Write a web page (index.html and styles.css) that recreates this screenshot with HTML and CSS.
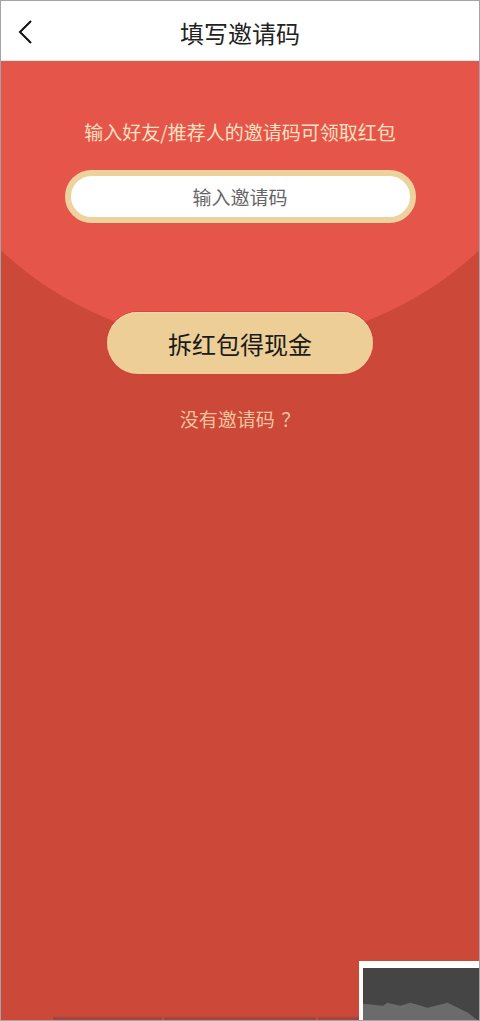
FILE: index.html
```html
<!DOCTYPE html>
<html lang="zh-CN">
<head>
<meta charset="utf-8">
<title>填写邀请码</title>
<link rel="stylesheet" href="styles.css">
</head>
<body>
<div class="frame">
  <header class="topbar">
    <button class="back" aria-label="返回">
      <svg width="16" height="26" viewBox="0 0 16 26"><polyline points="13,2 2,13 13,24" fill="none" stroke="#111" stroke-width="2"/></svg>
    </button>
    <h1 class="title">填写邀请码</h1>
  </header>
  <main class="envelope">
    <p class="hint">输入好友/推荐人的邀请码可领取红包</p>
    <div class="code-box">
      <input class="code-input" type="text" placeholder="输入邀请码">
    </div>
    <button class="open-btn">拆红包得现金</button>
    <a class="no-code">没有邀请码 <span class="q">？</span></a>
    <div class="tabs">
      <span class="tab t1"></span>
      <span class="tab t2"></span>
      <span class="tab t3"></span>
    </div>
  </main>
  <div class="badge">
    <svg class="badge-art" width="117" height="53" viewBox="0 0 117 53" preserveAspectRatio="none">
      <rect width="117" height="53" fill="#454545"/>
      <path d="M0,35 L20,37 L24,34 L37,37 L47,34 L64,39 L84,34 L94,39 L104,44 L112,50 L117,53 L0,53 Z" fill="#6b6b6b"/>
    </svg>
  </div>
</div>
</body>
</html>
```

FILE: styles.css
```css
* { box-sizing: border-box; }
html, body { margin: 0; padding: 0; }
body {
  width: 480px;
  height: 1021px;
  overflow: hidden;
  font-family: "Noto Sans CJK SC", "Noto Sans", sans-serif;
}
.frame {
  position: relative;
  width: 480px;
  height: 1021px;
  border: 1px solid #a4a4a4;
  display: flex;
  flex-direction: column;
  overflow: hidden;
}
.topbar {
  height: 60px;
  flex: 0 0 60px;
  background: #fff;
  display: flex;
  align-items: center;
  justify-content: center;
  position: relative;
  border-bottom: 1px solid #dfeaea;
}
.back {
  position: absolute;
  left: 17px;
  top: 18px;
  border: 0;
  background: none;
  padding: 0;
  width: 16px;
  height: 26px;
}
.back svg { display: block; }
.title {
  margin: 4px 0 0;
  font-size: 24px;
  font-weight: 400;
  color: #222;
  line-height: 30px;
}
.envelope {
  flex: 1;
  display: flex;
  flex-direction: column;
  align-items: center;
  background: radial-gradient(circle 351px at 50% -67px, #e5554a 350px, #cc4838 351px);
  padding-top: 57px;
}
.hint {
  margin: 0;
  font-size: 19px;
  line-height: 27px;
  color: #fde1c2;
}
.code-box {
  margin-top: 25px;
  width: 351px;
  height: 53px;
  border: 6px solid #eed29d;
  border-radius: 27px;
  background: #fff;
  display: flex;
}
.code-input {
  flex: 1;
  border: 0;
  background: transparent;
  outline: none;
  text-align: center;
  font-family: inherit;
  font-size: 19px;
  color: #333;
  padding: 0;
}
.code-input::placeholder { color: #666; }
.open-btn {
  margin-top: 89px;
  width: 266px;
  height: 62px;
  border: 0;
  border-radius: 31px;
  background: #ecce96;
  box-shadow: 0 0 0 1px rgba(214, 64, 52, 0.7), inset 0 1px 0 #f3dcae;
  font-family: inherit;
  font-size: 24px;
  color: #1a1a1a;
  padding: 0;
}
.no-code {
  margin-top: 31px;
  font-size: 19px;
  line-height: 27px;
  color: #f4c39e;
}
.no-code .q { margin-left: 2px; }
.tabs {
  margin-top: auto;
  margin-bottom: 0;
  align-self: stretch;
  display: flex;
  gap: 2px;
  padding-left: 52px;
  height: 4px;
}
.tab {
  height: 4px;
  background: #a2453a;
  border-top: 1px solid #c4493b;
}
.t1 { width: 109px; }
.t2 { width: 152px; }
.t3 { width: 130px; }
.badge {
  position: absolute;
  left: 358px;
  top: 960px;
  width: 122px;
  height: 61px;
  background: #fff;
  padding: 7px 0 0 4px;
}
.badge-art { display: block; width: 118px; height: 54px; }
```
